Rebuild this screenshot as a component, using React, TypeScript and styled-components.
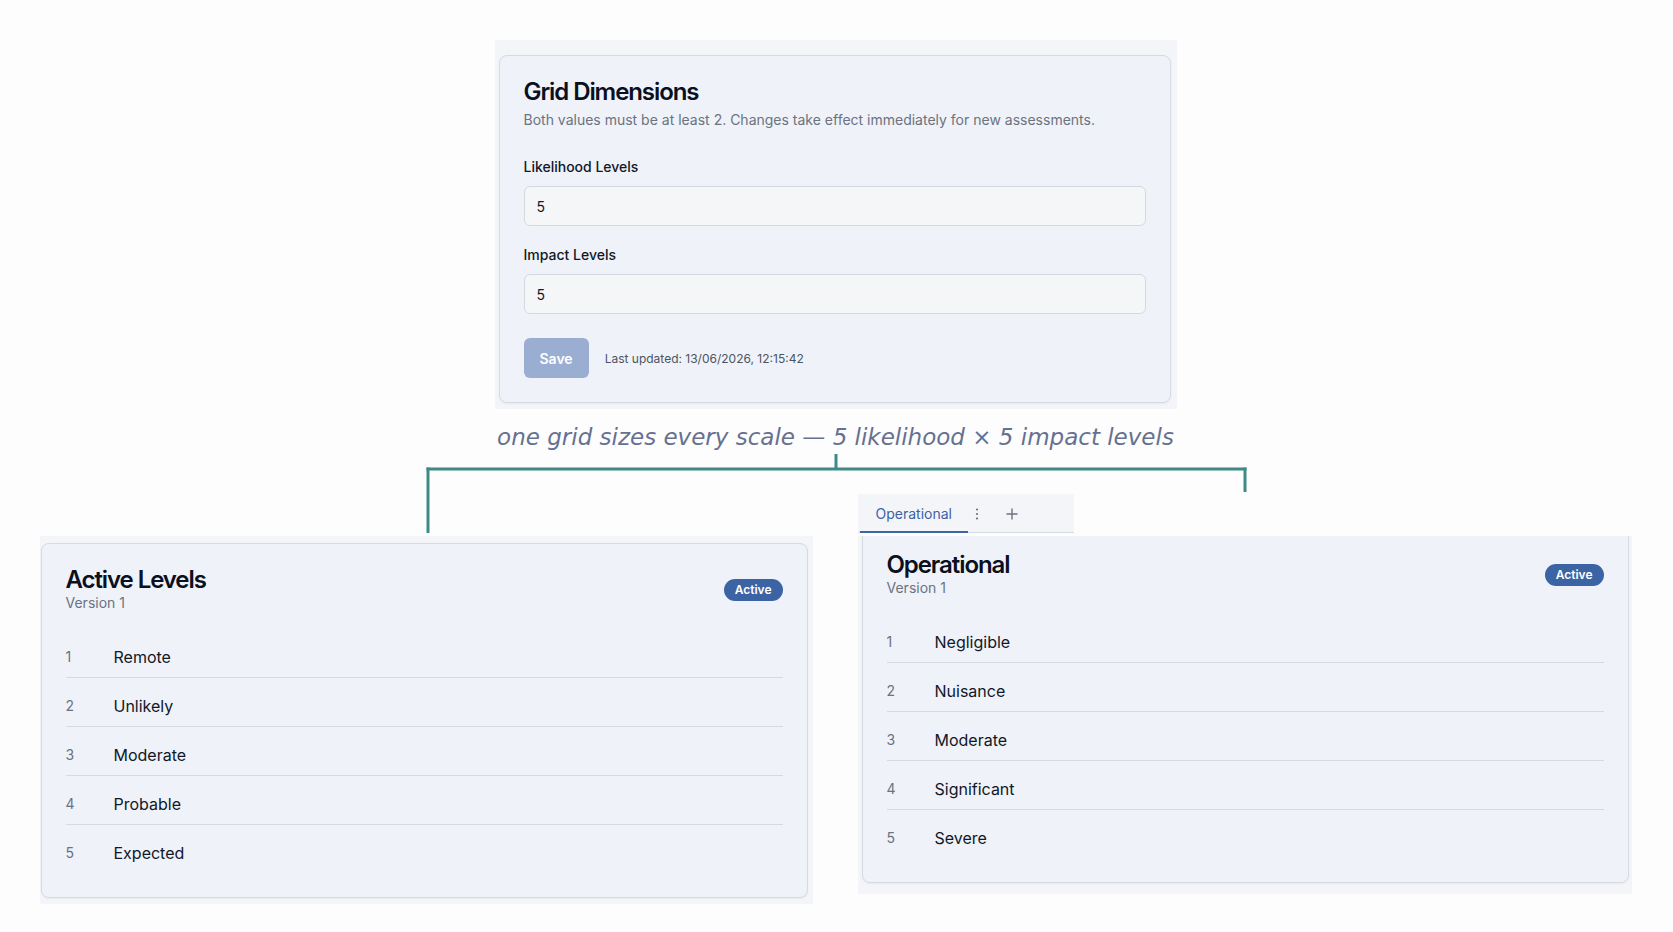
import styled, { createGlobalStyle } from 'styled-components'

const GlobalStyle = createGlobalStyle`
  * { box-sizing: border-box; }
  body {
    margin: 0;
    background: #fdfdfd;
    font-family: Inter, "Noto Sans", sans-serif;
    color: #0b1020;
  }
`

const likelihood = ['Remote', 'Unlikely', 'Moderate', 'Probable', 'Expected']
const impact = ['Negligible', 'Nuisance', 'Moderate', 'Significant', 'Severe']

const TEAL = '#3d8a87'

const Page = styled.div`
  min-height: 932px;
  padding: 40px 2px 0 0;
  display: flex;
  flex-direction: column;
  align-items: center;
`

interface CropProps {
  $inset: string;
  $width: number;
}

const Crop = styled.div<CropProps>`
  width: ${p => p.$width}px;
  padding: ${p => p.$inset};
  background: #f4f5f8;
  overflow: hidden;
`

const Card = styled.div<{ $clipTop?: number }>`
  background: #eff2f9;
  border: 1px solid #d6dae2;
  border-radius: 8px;
  padding: 22px 24px 24px;
  box-shadow: 0 1px 2px rgba(16, 24, 40, 0.05);
  margin-top: ${p => (p.$clipTop ? -p.$clipTop : 0)}px;
`

const Title = styled.h2`
  margin: 0;
  font-size: 24px;
  line-height: 27px;
  font-weight: 600;
  letter-spacing: -0.045em;
  color: #0b1020;
`

const Subtitle = styled.p`
  margin: 5px 0 27px;
  font-size: 14px;
  line-height: 20px;
  color: #6b7280;
`

const Field = styled.div`
  display: flex;
  flex-direction: column;
  & + & { margin-top: 19px; }
`

const Label = styled.label`
  font-size: 14px;
  line-height: 20px;
  font-weight: 500;
  color: #111827;
  margin-bottom: 9px;
`

const Input = styled.input`
  height: 40px;
  width: 100%;
  padding: 0 12px;
  border: 1px solid #d4d8df;
  border-radius: 6px;
  background: #f5f6f8;
  font-family: Inter, sans-serif;
  font-size: 14px;
  color: #111827;
  outline: none;
`

const Actions = styled.div`
  display: flex;
  align-items: center;
  gap: 16px;
  margin-top: 24px;
`

const SaveButton = styled.button`
  height: 40px;
  padding: 0 16px;
  border: none;
  border-radius: 6px;
  background: #9aaed1;
  color: #fff;
  font-family: Inter, sans-serif;
  font-size: 14px;
  font-weight: 600;
  cursor: not-allowed;
`

const Meta = styled.span`
  font-size: 12px;
  color: #4b5563;
`

const Caption = styled.div`
  margin-top: 15px;
  font-family: "DejaVu Sans", sans-serif;
  font-style: italic;
  font-size: 23px;
  line-height: 26px;
  color: #667091;
  white-space: nowrap;
`

const Connector = styled.svg`
  display: block;
  width: 1592px;
  height: 44px;
`

const Stem = styled.svg`
  display: block;
  width: 773px;
  height: 39px;
  margin-bottom: 3px;
`

const BottomRow = styled.div`
  display: grid;
  grid-template-columns: 773px 774px;
  column-gap: 45px;
  align-items: start;
`

const Column = styled.div`
  display: flex;
  flex-direction: column;
`

const TabStrip = styled.div`
  width: 216px;
  height: 39px;
  padding-left: 2px;
  margin-bottom: 3px;
  display: flex;
  align-items: stretch;
  background: #f4f5f8;
  border-bottom: 1px solid #d6dae1;
`

const Tab = styled.div`
  display: flex;
  align-items: center;
  padding: 1px 16px 0;
  margin-bottom: -1px;
  border-bottom: 2px solid #3d65a5;
  font-size: 14px;
  color: #3d62a3;
`

const IconButton = styled.button<{ $w: number; $ml: number }>`
  width: ${p => p.$w}px;
  margin-left: ${p => p.$ml}px;
  padding: 1px 0 0;
  border: none;
  background: transparent;
  color: #6b7280;
  display: flex;
  align-items: center;
  justify-content: center;
`

const Header = styled.div`
  display: flex;
  align-items: center;
  justify-content: space-between;
`

const Version = styled.div`
  font-size: 14px;
  line-height: 20px;
  color: #6b7280;
`

const Badge = styled.span`
  height: 22px;
  padding: 0 11px;
  border-radius: 11px;
  background: #3c63a4;
  color: #fff;
  font-size: 12px;
  font-weight: 600;
  line-height: 22px;
`

const List = styled.ol`
  list-style: none;
  margin: 16px 0 0;
  padding: 0;
`

const Row = styled.li`
  display: flex;
  align-items: center;
  padding: 18px 0 10px;
  line-height: 20px;
  & + & { border-top: 1px solid #d5d9e0; }
`

const Num = styled.span`
  width: 48px;
  font-size: 14px;
  color: #6b7280;
`

const Name = styled.span`
  font-size: 16px;
  color: #111827;
`

function LevelsCard({ title, items, clipTop }: { title: string; items: string[]; clipTop?: number }) {
  return (
    <Card $clipTop={clipTop}>
      <Header>
        <div>
          <Title>{title}</Title>
          <Version>Version 1</Version>
        </div>
        <Badge>Active</Badge>
      </Header>
      <List>
        {items.map((name, i) => (
          <Row key={name}>
            <Num>{i + 1}</Num>
            <Name>{name}</Name>
          </Row>
        ))}
      </List>
    </Card>
  )
}

export default function App() {
  return (
    <>
      <GlobalStyle />
      <Page>
        <Crop $width={682} $inset="15px 6px 6px 4px">
          <Card>
            <Title>Grid Dimensions</Title>
            <Subtitle>Both values must be at least 2. Changes take effect immediately for new assessments.</Subtitle>
            <Field>
              <Label>Likelihood Levels</Label>
              <Input defaultValue="5" />
            </Field>
            <Field>
              <Label>Impact Levels</Label>
              <Input defaultValue="5" />
            </Field>
            <Actions>
              <SaveButton disabled>Save</SaveButton>
              <Meta>Last updated: 13/06/2026, 12:15:42</Meta>
            </Actions>
          </Card>
        </Crop>

        <Caption>one grid sizes every scale — 5 likelihood × 5 impact levels</Caption>

        <Connector viewBox="0 0 1592 44">
          <g stroke={TEAL} strokeWidth="3" fill="none">
            <line x1="796" y1="4" x2="796" y2="19" />
            <line x1="386.5" y1="19" x2="1206.5" y2="19" />
            <line x1="388" y1="17.5" x2="388" y2="44" />
            <line x1="1205" y1="17.5" x2="1205" y2="42" />
          </g>
        </Connector>

        <BottomRow>
          <Column>
            <Stem viewBox="0 0 773 39">
              <line x1="388" y1="0" x2="388" y2="39" stroke={TEAL} strokeWidth="3" />
            </Stem>
            <Crop $width={773} $inset="7px 5px 6px 1px">
              <LevelsCard title="Active Levels" items={likelihood} />
            </Crop>
          </Column>
          <Column>
            <TabStrip>
              <Tab>Operational</Tab>
              <IconButton $w={18} $ml={0} aria-label="More">
                <svg width="4" height="16" viewBox="0 0 4 16">
                  <circle cx="2" cy="3.5" r="1.1" fill="currentColor" />
                  <circle cx="2" cy="8" r="1.1" fill="currentColor" />
                  <circle cx="2" cy="12.5" r="1.1" fill="currentColor" />
                </svg>
              </IconButton>
              <IconButton $w={28} $ml={12} aria-label="Add">
                <svg width="12" height="12" viewBox="0 0 12 12">
                  <path d="M6 1v10M1 6h10" stroke="currentColor" strokeWidth="1.4" strokeLinecap="round" />
                </svg>
              </IconButton>
            </TabStrip>
            <Crop $width={774} $inset="0 3px 11px 4px">
              <LevelsCard title="Operational" items={impact} clipTop={8} />
            </Crop>
          </Column>
        </BottomRow>
      </Page>
    </>
  )
}
